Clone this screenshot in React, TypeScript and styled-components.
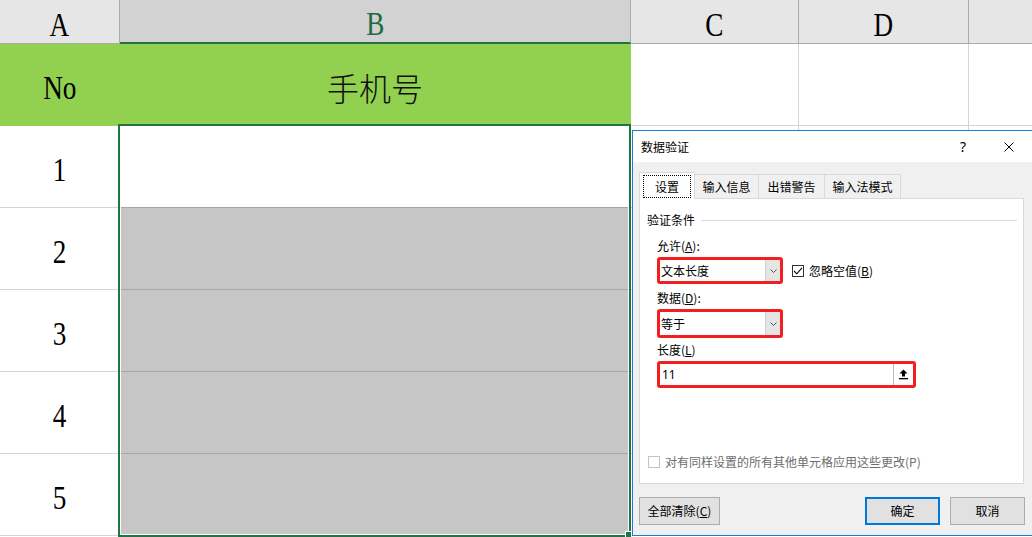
import React from "react";
import styled, { createGlobalStyle } from "styled-components";

const GlobalStyle = createGlobalStyle`
  html, body { margin: 0; padding: 0; background: #fff; }
  body { overflow: hidden; }
  * { box-sizing: border-box; }
`;

const Page = styled.div`
  position: relative;
  width: 1032px;
  height: 537px;
  overflow: hidden;
  background: #fff;
`;

/* ---------- spreadsheet ---------- */
const Sheet = styled.div`
  display: grid;
  grid-template-columns: 120px 511px 168px 170px 100px;
  grid-template-rows: 44px repeat(6, 82px);
`;

const ColHead = styled.div<{ $sel?: boolean }>`
  background: ${(p) => (p.$sel ? "#d2d2d2" : "#e6e6e6")};
  border-right: 1px solid #ababab;
  border-bottom: ${(p) => (p.$sel ? "2px solid #217346" : "1px solid #ababab")};
  color: ${(p) => (p.$sel ? "#1f6b41" : "#000")};
  display: flex;
  align-items: center;
  justify-content: center;
  overflow: hidden;
`;

const Cell = styled.div<{ $fill?: string; $vline?: string; $hline?: string }>`
  background: ${(p) => p.$fill ?? "#fff"};
  border-right: 1px solid ${(p) => p.$vline ?? "#d4d4d4"};
  border-bottom: 1px solid ${(p) => p.$hline ?? "#d4d4d4"};
  display: flex;
  align-items: center;
  justify-content: center;
  overflow: hidden;
`;

const SerifText = styled.span`
  display: inline-block;
  font-family: "Liberation Serif", "Times New Roman", serif;
  font-size: 34px;
  line-height: 1;
  transform: scaleX(0.8);
  margin-top: 6px;
`;

const CjkText = styled.span`
  font-family: "Noto Sans CJK SC", sans-serif;
  font-size: 32px;
  font-weight: 300;
  line-height: 1;
  margin-top: 5px;
  color: #111;
`;

const Selection = styled.div`
  position: absolute;
  left: 118px;
  top: 124px;
  width: 513px;
  height: 413px;
  border: 2px solid #217346;
  box-shadow: inset 0 0 0 1px #fff;
  pointer-events: none;
`;

const FillHandle = styled.div`
  position: absolute;
  left: 625px;
  top: 531px;
  width: 7px;
  height: 7px;
  background: #217346;
  border: 1px solid #fff;
`;

/* ---------- dialog ---------- */
const Dialog = styled.div`
  position: absolute;
  left: 632px;
  top: 130px;
  width: 402px;
  height: 406px;
  border: 1px solid #1a7fd4;
  background: #f0f0f0;
  display: flex;
  flex-direction: column;
  font-family: "Noto Sans CJK SC", "Noto Sans", sans-serif;
  font-size: 12px;
  color: #000;
`;

const TitleBar = styled.div`
  height: 31px;
  background: #fff;
  display: flex;
  align-items: center;
  padding-left: 8px;
  padding-right: 1px;
`;

const Title = styled.div`
  flex: 1;
  line-height: 16px;
`;

const CaptionButton = styled.div`
  width: 46px;
  height: 31px;
  display: flex;
  align-items: center;
  justify-content: center;
  font-family: "Noto Sans", sans-serif;
  font-size: 14px;
`;

const Body = styled.div`
  flex: 1;
  padding: 10px 0 0 6px;
  display: flex;
  flex-direction: column;
`;

const TabRow = styled.div`
  height: 26px;
  display: flex;
  align-items: flex-end;
`;

const Tab = styled.div<{ $w: number; $active?: boolean }>`
  width: ${(p) => p.$w}px;
  height: ${(p) => (p.$active ? 27 : 24)}px;
  margin-bottom: ${(p) => (p.$active ? -1 : 0)}px;
  margin-left: ${(p) => (p.$active ? 0 : -1)}px;
  background: ${(p) => (p.$active ? "#fff" : "#f0f0f0")};
  border: 1px solid #d9d9d9;
  border-bottom: none;
  position: relative;
  z-index: ${(p) => (p.$active ? 2 : 0)};
  display: flex;
  align-items: ${(p) => (p.$active ? "flex-start" : "center")};
  justify-content: center;
  padding-top: ${(p) => (p.$active ? 2 : 0)}px;
  line-height: 16px;
  &:first-child { margin-left: 0; }
`;

const FocusLabel = styled.span`
  width: 48px;
  height: 23px;
  border: 1px dotted #000;
  display: flex;
  align-items: center;
  justify-content: center;
`;

const Panel = styled.div`
  position: relative;
  z-index: 1;
  width: 385px;
  height: 286px;
  background: #fff;
  border: 1px solid #d9d9d9;
  display: flex;
  flex-direction: column;
  padding: 13px 6px 13px 7px;
`;

const Legend = styled.div`
  height: 16px;
  display: flex;
  align-items: center;
  gap: 6px;
  line-height: 16px;
  &::after {
    content: "";
    flex: 1;
    height: 1px;
    background: #dcdcdc;
    margin-top: 1px;
  }
`;

const Fields = styled.div`
  padding-left: 10px;
  display: flex;
  flex-direction: column;
`;

const Label = styled.div<{ $mt: number }>`
  height: 16px;
  line-height: 16px;
  margin-top: ${(p) => p.$mt}px;
`;

const ControlRow = styled.div`
  margin-top: 3px;
  display: flex;
  align-items: center;
`;

const Highlight = styled.div`
  border: 3px solid #f41e1e;
  border-radius: 3px;
  display: flex;
`;

const Combo = styled.div<{ $h: number }>`
  width: 120px;
  height: ${(p) => p.$h}px;
  background: #fff;
  display: flex;
  align-items: center;
`;

const ComboText = styled.div`
  flex: 1;
  padding-left: 1px;
  line-height: 16px;
`;

const DropButton = styled.div`
  width: 15px;
  align-self: stretch;
  background: #e5e5e5;
  border-left: 1px solid #d0d0d0;
  display: flex;
  align-items: center;
  justify-content: center;
`;

const TextInput = styled.div`
  width: 253px;
  height: 21px;
  background: #fff;
  display: flex;
  align-items: center;
`;

const InputText = styled.div`
  flex: 1;
  padding-left: 2px;
  font-family: "Noto Sans", sans-serif;
  line-height: 16px;
`;

const PickButton = styled.div`
  width: 20px;
  align-self: stretch;
  background: #fff;
  border-left: 1px solid #bcbcbc;
  display: flex;
  align-items: center;
  justify-content: center;
`;

const CheckLine = styled.label<{ $disabled?: boolean; $ml?: number }>`
  display: flex;
  align-items: center;
  gap: 5px;
  margin-left: ${(p) => p.$ml ?? 0}px;
  color: ${(p) => (p.$disabled ? "#6d6d6d" : "#000")};
  line-height: 16px;
`;

const Box = styled.span<{ $disabled?: boolean }>`
  width: 12px;
  height: 12px;
  border: 1px solid ${(p) => (p.$disabled ? "#c4c4c4" : "#333")};
  background: #fff;
  display: flex;
  align-items: center;
  justify-content: center;
`;

const BottomCheck = styled.div`
  margin-top: auto;
  padding-left: 1px;
`;

const ButtonRow = styled.div`
  width: 386px;
  margin-top: 13px;
  display: flex;
  align-items: center;
`;

const Button = styled.div<{ $w: number; $primary?: boolean }>`
  width: ${(p) => p.$w}px;
  height: 28px;
  background: #e1e1e1;
  border: ${(p) => (p.$primary ? "2px solid #0078d7" : "1px solid #adadad")};
  display: flex;
  align-items: center;
  justify-content: center;
  line-height: 16px;
`;

const Spacer = styled.div`
  flex: 1;
`;

const Gap = styled.div`
  width: 10px;
`;

const U = styled.u`
  text-underline-offset: 1px;
`;

const Chevron = () => (
  <svg width="7" height="4" viewBox="0 0 7 4">
    <polyline points="0.5,0.5 3.5,3.5 6.5,0.5" fill="none" stroke="#555" strokeWidth="1" />
  </svg>
);

const Check = () => (
  <svg width="10" height="10" viewBox="0 0 10 10">
    <polyline points="1,5 3.8,7.8 9,1.8" fill="none" stroke="#000" strokeWidth="1.1" />
  </svg>
);

const UploadIcon = () => (
  <svg width="11" height="11" viewBox="0 0 11 11">
    <path d="M5.5 0.5 L1.5 4.5 H4 V7.5 H7 V4.5 H9.5 Z" fill="#000" />
    <rect x="1" y="9" width="9" height="1.3" fill="#000" />
  </svg>
);

const CloseIcon = () => (
  <svg width="10" height="10" viewBox="0 0 10 10">
    <path d="M0.5 0.5 L9.5 9.5 M9.5 0.5 L0.5 9.5" stroke="#000" strokeWidth="1" fill="none" />
  </svg>
);

const GREEN = "#92d050";

export default function App() {
  const rows = [1, 2, 3, 4, 5];
  return (
    <Page>
      <GlobalStyle />
      <Sheet>
        <ColHead><SerifText>A</SerifText></ColHead>
        <ColHead $sel><SerifText>B</SerifText></ColHead>
        <ColHead><SerifText>C</SerifText></ColHead>
        <ColHead><SerifText>D</SerifText></ColHead>
        <ColHead />

        <Cell $fill={GREEN} $vline={GREEN} $hline={GREEN}><SerifText>No</SerifText></Cell>
        <Cell $fill={GREEN} $vline={GREEN} $hline={GREEN}><CjkText>手机号</CjkText></Cell>
        <Cell />
        <Cell />
        <Cell />

        {rows.map((n) => (
          <React.Fragment key={n}>
            <Cell><SerifText>{n}</SerifText></Cell>
            <Cell $fill={n === 1 ? "#fff" : "#c6c6c6"} $hline="#a6a6a6" />
            <Cell />
            <Cell />
            <Cell />
          </React.Fragment>
        ))}
      </Sheet>
      <Selection />
      <FillHandle />

      <Dialog>
        <TitleBar>
          <Title>数据验证</Title>
          <CaptionButton>?</CaptionButton>
          <CaptionButton><CloseIcon /></CaptionButton>
        </TitleBar>
        <Body>
          <TabRow>
            <Tab $w={56} $active><FocusLabel>设置</FocusLabel></Tab>
            <Tab $w={65}>输入信息</Tab>
            <Tab $w={67}>出错警告</Tab>
            <Tab $w={77}>输入法模式</Tab>
          </TabRow>
          <Panel>
            <Legend>验证条件</Legend>
            <Fields>
              <Label $mt={10}>允许(<U>A</U>):</Label>
              <ControlRow>
                <Highlight>
                  <Combo $h={21}>
                    <ComboText>文本长度</ComboText>
                    <DropButton><Chevron /></DropButton>
                  </Combo>
                </Highlight>
                <CheckLine $ml={9}>
                  <Box><Check /></Box>
                  <span>忽略空值(<U>B</U>)</span>
                </CheckLine>
              </ControlRow>
              <Label $mt={6}>数据(<U>D</U>):</Label>
              <ControlRow>
                <Highlight>
                  <Combo $h={23}>
                    <ComboText>等于</ComboText>
                    <DropButton><Chevron /></DropButton>
                  </Combo>
                </Highlight>
              </ControlRow>
              <Label $mt={4}>长度(<U>L</U>)</Label>
              <ControlRow>
                <Highlight>
                  <TextInput>
                    <InputText>11</InputText>
                    <PickButton><UploadIcon /></PickButton>
                  </TextInput>
                </Highlight>
              </ControlRow>
            </Fields>
            <BottomCheck>
              <CheckLine $disabled>
                <Box $disabled />
                <span>对有同样设置的所有其他单元格应用这些更改(P)</span>
              </CheckLine>
            </BottomCheck>
          </Panel>
          <ButtonRow>
            <Button $w={81}>全部清除(<U>C</U>)</Button>
            <Spacer />
            <Button $w={75} $primary>确定</Button>
            <Gap />
            <Button $w={75}>取消</Button>
          </ButtonRow>
        </Body>
      </Dialog>
    </Page>
  );
}
